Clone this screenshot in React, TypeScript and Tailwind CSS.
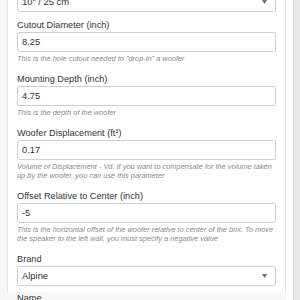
import React from 'react';

const font = { fontFamily: '"Liberation Sans", Arial, sans-serif' };

function Arrow() {
  return (
    <svg className="absolute right-[8px] top-1/2 -translate-y-1/2" width="5" height="4" viewBox="0 0 5 4">
      <path d="M0 0h5L2.5 4z" fill="#6b6b6b" />
    </svg>
  );
}

function Field({ label, value, help, select }: { label: React.ReactNode; value: string; help?: string; select?: boolean }) {
  return (
    <div className={help ? 'mb-[11px]' : 'mb-[7px]'}>
      <div className="text-[9.2px] leading-[10px] text-[#333] mb-[2px]">{label}</div>
      <div className="relative h-[20px] border border-[#cfcfcf] rounded-[2px] bg-white flex items-center pl-[4px] text-[9.4px] text-[#333]">
        {value}
        {select && <Arrow />}
      </div>
      {help && <div className="mt-[2px] text-[7.4px] leading-[9px] italic text-[#8a8a8a]">{help}</div>}
    </div>
  );
}

export default function App() {
  return (
    <div className="h-[300px] w-[300px] overflow-hidden flex bg-[#f6f6f6]" style={font}>
      <div className="flex-1 pl-[7px]">
        <div className="h-full bg-white border-x border-[#e4e4e4] px-[9px]">
          <div className="relative -mt-[8px] mb-[8px] h-[20px] border border-[#cfcfcf] rounded-[2px] bg-white flex items-center pl-[4px] text-[9.4px] text-[#333]">
            10" / 25 cm
            <Arrow />
          </div>
          <Field label="Cutout Diameter (inch)" value="8.25" help={'This is the hole cutout needed to "drop-in" a woofer'} />
          <Field label="Mounting Depth (inch)" value="4.75" help="This is the depth of the woofer" />
          <Field
            label={<>Woofer Displacement (ft<sup className="text-[5.5px]">3</sup>)</>}
            value="0.17"
            help="Volume of Displacement - Vd. If you want to compensate for the volume taken up by the woofer, you can use this parameter"
          />
          <Field
            label="Offset Relative to Center (inch)"
            value="-5"
            help="This is the horizontal offset of the woofer relative to center of the box. To move the speaker to the left wall, you must specify a negative value"
          />
          <Field label="Brand" value="Alpine" select />
          <div className="text-[9.2px] leading-[10px] text-[#333]">Name</div>
        </div>
      </div>
      <div className="w-[7px] bg-white" />
      <div className="w-[7px] bg-[#e8e8e8] border-l border-[#dadada]" />
    </div>
  );
}
